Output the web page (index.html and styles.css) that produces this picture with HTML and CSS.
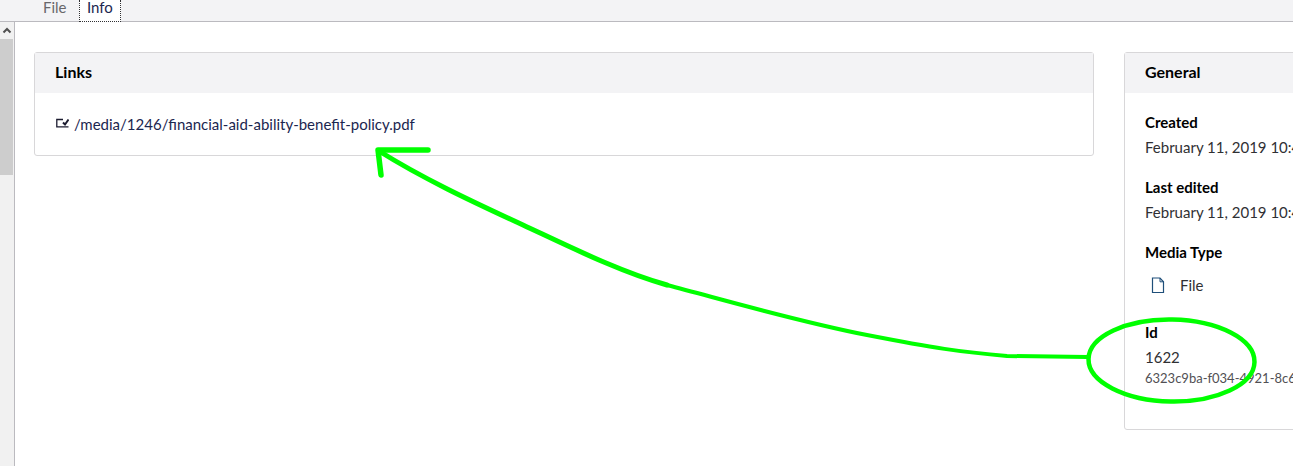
FILE: index.html
```html
<!DOCTYPE html>
<html lang="en">
<head>
  <meta charset="UTF-8">
  <title>Media info</title>
  <link rel="stylesheet" href="styles.css">
</head>
<body>
  <div class="md-tabs">
    <span class="md-tab">File</span>
    <span class="md-tab md-tab--active">Info</span>
  </div>

  <div class="md-body">
    <div class="md-scrollbar">
      <div class="md-scrollbar__btn">
        <svg width="10" height="7" viewBox="0 0 10 7"><path d="M1.500 5.500 5 2l3.500 3.500" fill="none" stroke="#505050" stroke-width="2"/></svg>
      </div>
      <div class="md-scrollbar__thumb"></div>
    </div>

    <main class="md-content">
      <section class="md-card md-card--links">
        <h2 class="md-card__title">Links</h2>
        <div class="md-links">
          <svg class="md-links__icon" width="13" height="10" viewBox="0 0 13 10">
            <path d="M7 1.500H.8V8.800H12.500" fill="none" stroke="#1b1b2f" stroke-width="1.300"/>
            <path d="M7 4.500 9 6.500 12.500 1.500" fill="none" stroke="#1b1b2f" stroke-width="2"/>
          </svg>
          <a class="md-links__url">/media/1246/financial-aid-ability-benefit-policy.pdf</a>
        </div>
      </section>

      <section class="md-card md-card--general">
        <h2 class="md-card__title">General</h2>
        <div class="md-general">
          <div class="md-prop">
            <h3 class="md-prop__label">Created</h3>
            <div class="md-prop__value">February 11, 2019 10:4</div>
          </div>
          <div class="md-prop">
            <h3 class="md-prop__label">Last edited</h3>
            <div class="md-prop__value">February 11, 2019 10:4</div>
          </div>
          <div class="md-prop">
            <h3 class="md-prop__label">Media Type</h3>
            <div class="md-type">
              <svg width="14" height="17" viewBox="0 0 14 17">
                <path d="M1.500 1H9l3.500 3.800V15.500H1.500z" fill="#fff" stroke="#1f4f7a" stroke-width="1.200"/>
                <path d="M9 1v3.800h3.500" fill="none" stroke="#1f4f7a" stroke-width="1"/>
              </svg>
              <span>File</span>
            </div>
          </div>
          <div class="md-prop">
            <h3 class="md-prop__label">Id</h3>
            <div class="md-prop__value">1622</div>
            <small class="md-prop__guid">6323c9ba-f034-4921-8c6</small>
          </div>
        </div>
      </section>
    </main>
  </div>

  <!-- hand drawn annotation on top of the page -->
  <svg class="md-markup" width="1293" height="466" viewBox="0 0 1293 466">
    <g fill="none" stroke="#00ff00" stroke-linecap="round" stroke-linejoin="round">
      <path stroke-width="5.500" d="M428 150H378L381 175"/>
      <path stroke-width="5" d="M379 151C425 180 480 205 523 225S620 272 667 285"/>
      <path stroke-width="4" d="M667 285C735 303 800 322 867 335S960 352 1007 356L1087 357"/>
      <ellipse stroke-width="4.500" cx="1171.500" cy="360.500" rx="83" ry="41" transform="rotate(1 1171.500 360.500)"/>
    </g>
  </svg>
</body>
</html>
```

FILE: styles.css
```css
/* Root resets */
* { margin: 0; padding: 0; box-sizing: border-box; }
html, body { height: 100%; overflow: hidden; }
body { position: relative; font-family: 'Lato', sans-serif; background-color: #ffffff; color: #1b264f; }

/* Tabs */
.md-tabs {
  display: flex;
  height: 22px;
  padding-left: 30px;
  background-color: #f3f3f5;
  border-bottom: 1px solid #bbbabf;
}
.md-tab { width: 49px; padding-left: 13px; font-size: 15px; line-height: 14px; color: #68676b; }
.md-tab--active {
  width: 42px;
  height: 22px;
  padding-left: 7px;
  color: #1b264f;
  background-color: #ffffff;
  border: 1px dotted #303033;
  border-top: none;
}

/* Layout under the tabs */
.md-body { display: flex; height: 444px; }

.md-scrollbar { flex: none; width: 15px; background-color: #f1f1f1; border-right: 1px solid #bbbabf; }
.md-scrollbar__btn { display: flex; justify-content: center; align-items: center; height: 17px; background-color: #f1f1f1; }
.md-scrollbar__thumb { height: 136px; margin-right: 1px; background-color: #cdcdcd; }

.md-content {
  flex: none;
  display: grid;
  grid-template-columns: 1060px 340px;
  gap: 30px;
  align-items: start;
  padding: 30px 0 0 19px;
}

/* Cards */
.md-card { background-color: #ffffff; border: 1px solid #d8d7d9; border-radius: 3px; }
.md-card__title {
  height: 40px;
  padding-left: 20px;
  font-size: 16px;
  font-weight: 700;
  line-height: 38px;
  color: #000000;
  background-color: #f3f3f5;
}
.md-card--general { height: 378px; }

.md-links { display: flex; align-items: center; gap: 5px; height: 62px; padding-left: 21px; }
.md-links__url { font-size: 15px; color: #1b264f; }
.md-links__icon { flex: none; margin-top: -2px; }

.md-general { padding: 19px 20px 0; }
.md-prop { margin-bottom: 20px; }
.md-prop__label { font-size: 15px; font-weight: 700; line-height: 20px; color: #000000; margin-bottom: 5px; }
.md-prop__value { font-size: 15px; line-height: 20px; color: #303033; white-space: nowrap; }
.md-prop__guid { display: block; font-size: 13px; line-height: 23px; color: #515054; white-space: nowrap; }

.md-type { display: flex; align-items: center; gap: 15px; height: 36px; margin-bottom: -1px; padding-left: 6px; font-size: 15px; color: #303033; }

/* Annotation */
.md-markup { position: absolute; top: 0; left: 0; pointer-events: none; }
```
